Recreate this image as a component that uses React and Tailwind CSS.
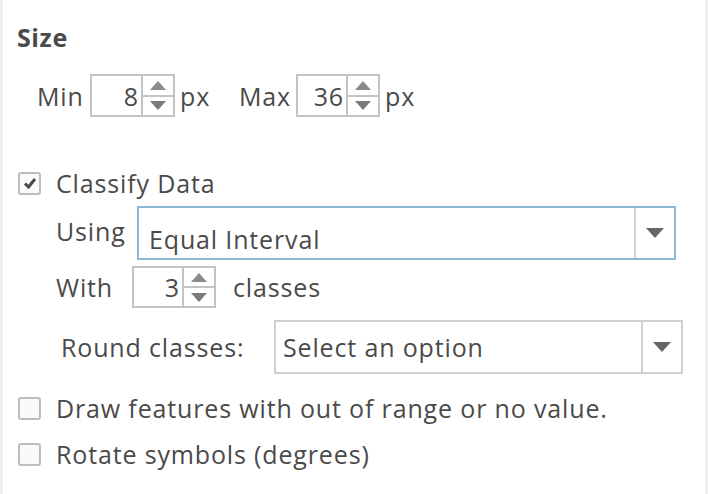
import React from 'react';

const Spinner = ({ value, width, height }) => (
  <div className={`flex border-2 border-[#c4c4c4] bg-white ${width} ${height}`}>
    <div className="flex flex-1 items-center justify-end pr-[2px]">{value}</div>
    <div className="flex w-[32px] flex-col border-l-2 border-[#c4c4c4]">
      <div className="flex flex-1 items-center justify-center border-b-2 border-[#c4c4c4]">
        <svg width="16" height="9" viewBox="0 0 16 9"><path d="M8 0 L16 9 L0 9 Z" fill="#8a8a8a" /></svg>
      </div>
      <div className="flex flex-1 items-center justify-center">
        <svg width="16" height="9" viewBox="0 0 16 9"><path d="M0 0 L16 0 L8 9 Z" fill="#7a7a7a" /></svg>
      </div>
    </div>
  </div>
);

const Check = ({ checked }) => (
  <div className="flex h-[23px] w-[23px] items-center justify-center rounded-[3px] border-2 border-[#bdbdbd] bg-[#fafafa]">
    {checked && (
      <svg width="14" height="12" viewBox="0 0 14 12">
        <path d="M2 6.5 L5.5 10 L12 2" fill="none" stroke="#4a4a4a" strokeWidth="3" />
      </svg>
    )}
  </div>
);

const Arrow = () => (
  <svg width="18" height="10" viewBox="0 0 18 10"><path d="M0 0 L18 0 L9 10 Z" fill="#666" /></svg>
);

export default function App() {
  return (
    <div className="h-[494px] w-[708px] border-x-[3px] border-[#efefef] bg-white font-['Open_Sans','Noto_Sans',sans-serif] text-[25px] leading-[30px] tracking-[0.85px] text-[#4a4a4a]">
      <div className="pl-[14px] pt-[21px]">
        <div className="text-[25px] font-bold leading-[32px] tracking-[0.6px]">Size</div>

        <div className="mt-[21px] flex items-center pl-[20px]">
          <span className="w-[53px]">Min</span>
          <Spinner value="8" width="w-[85px]" height="h-[43px]" />
          <span className="ml-[5px] w-[59px]">px</span>
          <span className="w-[57px]">Max</span>
          <Spinner value="36" width="w-[84px]" height="h-[43px]" />
          <span className="ml-[5px]">px</span>
        </div>

        <div className="mt-[51px] flex items-center gap-[15px] pl-px">
          <Check checked />
          <span>Classify Data</span>
        </div>

        <div className="mt-[8px] flex items-center pl-[39px]">
          <span className="w-[81px] self-start pt-[10px]">Using</span>
          <div className="flex h-[54px] w-[539px] border-2 border-[#8ab8d6] bg-white">
            <div className="flex flex-1 items-center pl-[10px] pt-[12px]">Equal Interval</div>
            <div className="flex w-[40px] items-center justify-center border-l-2 border-[#cfcfcf]">
              <Arrow />
            </div>
          </div>
        </div>

        <div className="mt-[6px] flex items-center pl-[39px]">
          <span className="w-[76px]">With</span>
          <Spinner value="3" width="w-[84px]" height="h-[42px]" />
          <span className="ml-[17px]">classes</span>
        </div>

        <div className="mt-[12px] flex items-center pl-[44px]">
          <span className="w-[213px]">Round classes:</span>
          <div className="flex h-[54px] w-[409px] border-2 border-[#cfcfcf] bg-white">
            <div className="flex flex-1 items-center pl-[7px]">Select an option</div>
            <div className="flex w-[40px] items-center justify-center border-l-2 border-[#cfcfcf]">
              <Arrow />
            </div>
          </div>
        </div>

        <div className="mt-[19px] flex items-center gap-[15px] pl-px">
          <Check />
          <span>Draw features with out of range or no value.</span>
        </div>

        <div className="mt-[16px] flex items-center gap-[15px] pl-px">
          <Check />
          <span>Rotate symbols (degrees)</span>
        </div>
      </div>
    </div>
  );
}
